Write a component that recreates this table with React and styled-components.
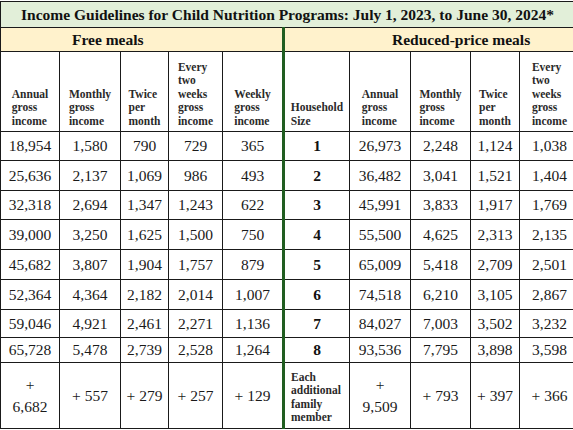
import React from 'react';
import styled, { createGlobalStyle } from 'styled-components';

const GlobalStyle = createGlobalStyle`
  html, body {
    margin: 0;
    padding: 0;
    background: #ffffff;
    overflow: hidden;
  }
  body {
    font-family: "Liberation Serif", "Times New Roman", serif;
    color: #111111;
  }
`;

const freeCols = [
  ['Annual', 'gross', 'income'],
  ['Monthly', 'gross', 'income'],
  ['Twice', 'per', 'month'],
  ['Every', 'two', 'weeks', 'gross', 'income'],
  ['Weekly', 'gross', 'income'],
];

const reducedCols = [
  ['Annual', 'gross', 'income'],
  ['Monthly', 'gross', 'income'],
  ['Twice', 'per', 'month'],
  ['Every', 'two', 'weeks', 'gross', 'income'],
];

const rows = [
  { h: 29, free: ['18,954', '1,580', '790', '729', '365'], size: '1', reduced: ['26,973', '2,248', '1,124', '1,038'] },
  { h: 30, free: ['25,636', '2,137', '1,069', '986', '493'], size: '2', reduced: ['36,482', '3,041', '1,521', '1,404'] },
  { h: 29, free: ['32,318', '2,694', '1,347', '1,243', '622'], size: '3', reduced: ['45,991', '3,833', '1,917', '1,769'] },
  { h: 30, free: ['39,000', '3,250', '1,625', '1,500', '750'], size: '4', reduced: ['55,500', '4,625', '2,313', '2,135'] },
  { h: 30, free: ['45,682', '3,807', '1,904', '1,757', '879'], size: '5', reduced: ['65,009', '5,418', '2,709', '2,501'] },
  { h: 30, free: ['52,364', '4,364', '2,182', '2,014', '1,007'], size: '6', reduced: ['74,518', '6,210', '3,105', '2,867'] },
  { h: 28, free: ['59,046', '4,921', '2,461', '2,271', '1,136'], size: '7', reduced: ['84,027', '7,003', '3,502', '3,232'] },
  { h: 25, free: ['65,728', '5,478', '2,739', '2,528', '1,264'], size: '8', reduced: ['93,536', '7,795', '3,898', '3,598'] },
];

const colWidths = [59, 61, 48, 54, 61, 66, 61, 60, 49, 60];

export default function App() {
  return (
    <>
      <GlobalStyle />
      <Table>
        <colgroup>
          {colWidths.map((w, i) => (
            <col key={i} style={{ width: w }} />
          ))}
        </colgroup>
        <thead>
          <tr>
            <TitleCell colSpan={10}>
              Income Guidelines for Child Nutrition Programs: July 1, 2023, to June 30, 2024*
            </TitleCell>
          </tr>
          <tr>
            <SectionCell colSpan={5} indent={71}>Free meals</SectionCell>
            <SectionCell colSpan={5} indent={107} divider>Reduced-price meals</SectionCell>
          </tr>
          <tr>
            {freeCols.map((lines, i) => (
              <HeadCell key={'f' + i}>
                <HeadText>{lines.map((l) => <span key={l}>{l}</span>)}</HeadText>
              </HeadCell>
            ))}
            <HeadCell divider>
              <HeadText><span>Household</span><span>Size</span></HeadText>
            </HeadCell>
            {reducedCols.map((lines, i) => (
              <HeadCell key={'r' + i}>
                <HeadText>{lines.map((l) => <span key={l}>{l}</span>)}</HeadText>
              </HeadCell>
            ))}
          </tr>
        </thead>
        <tbody>
          {rows.map((r) => (
            <tr key={r.size} style={{ height: r.h }}>
              {r.free.map((v, i) => <Num key={'f' + i}>{v}</Num>)}
              <SizeCell>{r.size}</SizeCell>
              {r.reduced.map((v, i) => <Num key={'r' + i}>{v}</Num>)}
            </tr>
          ))}
          <tr style={{ height: 66 }}>
            <Num><Stack><span>+</span><span>6,682</span></Stack></Num>
            <Num>+ 557</Num>
            <Num>+ 279</Num>
            <Num>+ 257</Num>
            <Num>+ 129</Num>
            <ExtraCell>
              <HeadText><span>Each</span><span>additional</span><span>family</span><span>member</span></HeadText>
            </ExtraCell>
            <Num><Stack><span>+</span><span>9,509</span></Stack></Num>
            <Num>+ 793</Num>
            <Num>+ 397</Num>
            <Num>+ 366</Num>
          </tr>
        </tbody>
      </Table>
    </>
  );
}

const Table = styled.table`
  border-collapse: collapse;
  table-layout: fixed;
  width: 579px;
  margin-top: 1px;
  td, th {
    border: 1px solid #1a1a1a;
    padding: 0;
  }
`;

const TitleCell = styled.th`
  height: 25px;
  background: #e2efd9;
  font-size: 15.5px;
  font-weight: 700;
  text-align: left;
  padding-left: 20px !important;
  white-space: nowrap;
`;

const SectionCell = styled.th`
  height: 23px;
  background: #fff2cc;
  font-size: 15.5px;
  font-weight: 700;
  text-align: left;
  padding-left: ${({ indent }) => indent}px !important;
  border-left: ${({ divider }) => (divider ? '3px solid #215e21' : '1px solid #1a1a1a')} !important;
`;

const HeadCell = styled.th`
  height: 76px;
  vertical-align: bottom;
  text-align: center;
  padding-bottom: 3px !important;
  border-left: ${({ divider }) => (divider ? '3px solid #215e21' : '1px solid #1a1a1a')} !important;
`;

const HeadText = styled.div`
  display: inline-flex;
  flex-direction: column;
  align-items: flex-start;
  text-align: left;
  font-size: 11.5px;
  font-weight: 700;
  line-height: 13.5px;
  color: #2a2a2a;
`;

const Num = styled.td`
  text-align: center;
  vertical-align: middle;
  font-size: 15.5px;
  color: #1a1a1a;
  white-space: nowrap;
`;

const Stack = styled.div`
  display: flex;
  flex-direction: column;
  align-items: center;
  line-height: 22px;
`;

const SizeCell = styled.td`
  text-align: center;
  vertical-align: middle;
  font-size: 15.5px;
  font-weight: 700;
  border-left: 3px solid #215e21 !important;
`;

const ExtraCell = styled.td`
  vertical-align: middle;
  text-align: left;
  padding-left: 6px !important;
  border-left: 3px solid #215e21 !important;
`;
